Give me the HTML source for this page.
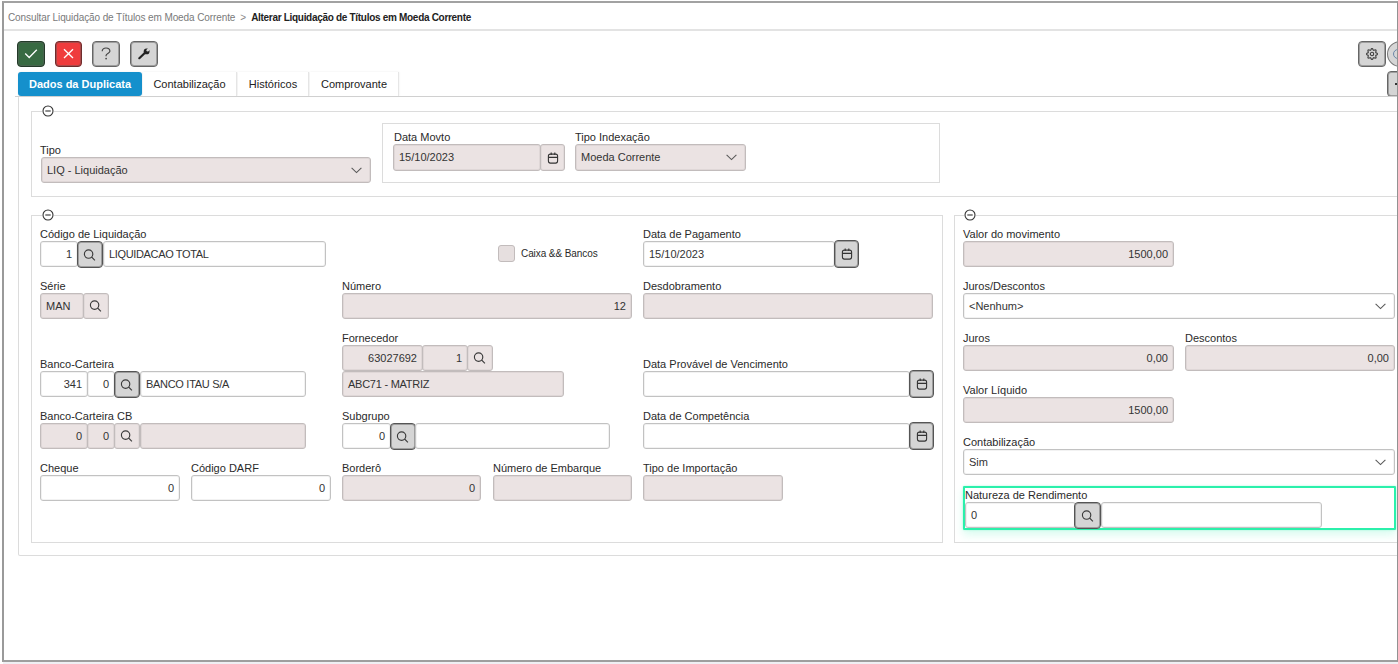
<!DOCTYPE html>
<html><head><meta charset="utf-8">
<style>
*{box-sizing:border-box;margin:0;padding:0}
html,body{width:1398px;height:664px;overflow:hidden;background:#fff;font-family:"Liberation Sans",sans-serif;color:#333}
.a{position:absolute}
#frame{position:absolute;z-index:10;left:2px;top:1px;width:1396px;height:661px;border:1px solid #929292;border-left:2px solid #9a9a9a;border-top:2px solid #a2a2a2;border-bottom:2px solid #9e9e9e}
#bottom{position:absolute;left:3px;top:662px;width:1395px;height:2px;background:#efeff3}
.sep{position:absolute;background:#e3e3e3}
.crumb{position:absolute;left:8px;top:12px;font-size:10px;color:#7a7a7a;letter-spacing:-0.1px;white-space:nowrap}
.crumb b{color:#222;letter-spacing:-0.3px}
.crumb .gt{color:#888;margin:0 5px 0 5px;letter-spacing:0}
.btn{position:absolute;height:26px;border-radius:4px;border:1px solid #555;background:#d5d5d5;box-shadow:inset 0 0 0 1px rgba(90,90,90,.45)}
.btn svg{position:absolute;left:50%;top:50%;transform:translate(-50%,-50%)}
.tab{position:absolute;top:72px;height:24px;font-size:11px;color:#222;text-align:center;line-height:24px;background:#fff;border-right:1px solid #e6e6e6;box-shadow:0 0 2px rgba(0,0,0,.08)}
.tab.on{background:#1590cc;color:#fff;font-weight:bold;border-radius:3px;border:none}
.panel{position:absolute;border:1px solid #dcdcdc;border-radius:2px}
.fs{position:absolute;border:1px solid #dcdcdc}
.leg{position:absolute;width:12px;height:12px;background:#fff}
.leg svg{display:block}
svg{display:block}
.lbl{position:absolute;font-size:11px;color:#2a2a2a;white-space:nowrap;line-height:13px}
.in{position:absolute;height:26px;border:1px solid #c2c2c2;box-shadow:inset 0 0 0 1px rgba(0,0,0,.05);border-radius:3px;background:#fff;font-size:11px;color:#333;line-height:24px;padding:0 5px;white-space:nowrap;overflow:hidden}
.dis{background:#ebe3e3;border-color:#c2bcbc}
.r{text-align:right}
.sb{position:absolute;height:27px;border:1px solid #555;border-radius:4px;background:#d5d5d5;box-shadow:inset 0 0 0 1px rgba(90,90,90,.45)}
.sbd{position:absolute;height:26px;border:1px solid #c2bcbc;box-shadow:inset 0 0 0 1px rgba(0,0,0,.04);border-radius:3px;background:#ebe3e3}
.ico{position:absolute;left:50%;top:50%;transform:translate(-50%,-50%)}
</style></head><body>
<div id="frame"></div>
<div id="bottom"></div>
<div class="crumb">Consultar Liquidação de Títulos em Moeda Corrente<span class="gt">&gt;</span><b>Alterar Liquidação de Títulos em Moeda Corrente</b></div>
<div class="sep" style="left:3px;top:29px;width:1395px;height:2px"></div>

<!-- toolbar -->
<div class="btn" style="left:17px;top:41px;width:28px;background:#386a42;border-color:#243a29"></div>
<svg class="a" style="left:24px;top:48px" width="14" height="11" viewBox="0 0 14 11"><path d="M1.2 5.5 L5.2 9.5 L12.8 1.8" stroke="#fff" stroke-width="1.3" fill="none"/></svg>
<div class="btn" style="left:55px;top:41px;width:27px;background:#ef3c3d;border-color:#6e2d2d"></div>
<svg class="a" style="left:63px;top:48px" width="11" height="11" viewBox="0 0 11 11"><path d="M1 1.2 L10 10 M10 1.2 L1 10" stroke="#fff" stroke-width="1.3" fill="none"/></svg>
<div class="btn" style="left:92px;top:41px;width:28px;border-color:#666;border-width:1.5px;border-radius:4px"></div>
<svg class="a" style="left:101px;top:47px" width="10" height="13" viewBox="0 0 10 13"><path d="M1.2 4.3 C1.2 2.2 2.8 1 5 1 C7.2 1 8.9 2.3 8.9 4.3 C8.9 6.3 5.1 6.6 5.1 8.3 V9.3" stroke="#454545" stroke-width="1.2" fill="none"/><circle cx="5.1" cy="11.6" r="0.85" fill="#454545"/></svg>
<div class="btn" style="left:130px;top:41px;width:28px;border-color:#666;border-width:1.5px;border-radius:4px"></div>
<svg class="a" style="left:137px;top:47px" width="14" height="14" viewBox="0 0 14 14"><path d="M2.3 11.2 L7.8 6" stroke="#222" stroke-width="2.2" stroke-linecap="round"/><circle cx="9.6" cy="4.4" r="2.9" fill="#222"/><circle cx="10.7" cy="3.3" r="1.2" fill="#d5d5d5"/><path d="M10.7 3.3 L13.6 0.4" stroke="#d5d5d5" stroke-width="1.9"/></svg>
<div class="btn" style="left:1358px;top:41px;width:28px;border-color:#666;border-width:1.5px;border-radius:4px"></div>
<svg class="a" style="left:1366px;top:47.5px" width="12" height="12" viewBox="0 0 12 12"><path d="M11.50 6.00 L11.39 6.35 L11.08 6.67 L10.66 6.93 L10.23 7.13 L9.88 7.32 L9.70 7.53 L9.68 7.81 L9.79 8.19 L9.95 8.64 L10.07 9.12 L10.06 9.56 L9.89 9.89 L9.56 10.06 L9.12 10.07 L8.64 9.95 L8.19 9.79 L7.81 9.68 L7.53 9.70 L7.32 9.88 L7.13 10.23 L6.93 10.66 L6.67 11.08 L6.35 11.39 L6.00 11.50 L5.65 11.39 L5.33 11.08 L5.07 10.66 L4.87 10.23 L4.68 9.88 L4.47 9.70 L4.19 9.68 L3.81 9.79 L3.36 9.95 L2.88 10.07 L2.44 10.06 L2.11 9.89 L1.94 9.56 L1.93 9.12 L2.05 8.64 L2.21 8.19 L2.32 7.81 L2.30 7.53 L2.12 7.32 L1.77 7.13 L1.34 6.93 L0.92 6.67 L0.61 6.35 L0.50 6.00 L0.61 5.65 L0.92 5.33 L1.34 5.07 L1.77 4.87 L2.12 4.68 L2.30 4.47 L2.32 4.19 L2.21 3.81 L2.05 3.36 L1.93 2.88 L1.94 2.44 L2.11 2.11 L2.44 1.94 L2.88 1.93 L3.36 2.05 L3.81 2.21 L4.19 2.32 L4.47 2.30 L4.68 2.12 L4.87 1.77 L5.07 1.34 L5.33 0.92 L5.65 0.61 L6.00 0.50 L6.35 0.61 L6.67 0.92 L6.93 1.34 L7.13 1.77 L7.32 2.12 L7.53 2.30 L7.81 2.32 L8.19 2.21 L8.64 2.05 L9.12 1.93 L9.56 1.94 L9.89 2.11 L10.06 2.44 L10.07 2.88 L9.95 3.36 L9.79 3.81 L9.68 4.19 L9.70 4.47 L9.88 4.68 L10.23 4.87 L10.66 5.07 L11.08 5.33 L11.39 5.65Z" stroke="#404040" stroke-width="1.15" fill="none" stroke-linejoin="round"/><circle cx="6" cy="6" r="1.7" stroke="#404040" stroke-width="1.1" fill="none"/></svg>
<div class="a" style="left:1387px;top:41px;width:27px;height:26px;border-radius:50%;border:1.5px solid #777;background:#d6d6d6"></div>
<div class="a" style="left:1393px;top:49px;width:10px;height:10px;border-radius:50%;border:1.5px solid #6b86a8"></div>
<div class="btn" style="left:1387px;top:71px;width:20px;height:26px;border-color:#666;border-width:1.5px;border-radius:4px"></div>
<div class="a" style="left:1395px;top:83px;width:2px;height:2px;background:#333"></div>

<!-- tabs -->
<div class="tab on" style="left:18px;width:124px">Dados da Duplicata</div>
<div class="tab" style="left:143px;width:94px">Contabilização</div>
<div class="tab" style="left:238px;width:71px">Históricos</div>
<div class="tab" style="left:310px;width:89px">Comprovante</div>
<div class="sep" style="left:15px;top:96px;width:1383px;height:1px;background:#d0d0d0"></div>

<div class="panel" style="left:18px;top:96px;width:1400px;height:460px;border-top:none"></div>

<!-- fieldset 1 -->
<div class="fs" style="left:31px;top:111px;width:1380px;height:86px"></div>
<div class="leg" style="left:42px;top:105px"><svg width="12" height="12" viewBox="0 0 12 12"><circle cx="6" cy="6" r="5" stroke="#333" stroke-width="1.1" fill="#fff"/><path d="M3.3 6 H8.7" stroke="#333" stroke-width="1.1"/></svg></div>

<div class="lbl" style="left:40px;top:144px">Tipo</div>
<div class="in dis" style="left:41px;top:157px;width:330px">LIQ - Liquidação<svg class="a" style="right:8px;top:9px" width="11" height="7" viewBox="0 0 11 7"><path d="M0.6 0.8 L5.5 5.6 L10.4 0.8" stroke="#5a5a5a" stroke-width="1.1" fill="none"/></svg></div>
<div class="fs" style="left:382px;top:123px;width:558px;height:60px"></div>
<div class="lbl" style="left:394px;top:131px">Data Movto</div>
<div class="in dis" style="left:393px;top:144px;width:148px;height:27px;line-height:25px">15/10/2023</div>
<div class="sbd" style="left:540px;top:144px;width:25px;height:27px"><svg class="ico" width="12" height="13" viewBox="0 0 12 13"><rect x="1.4" y="2.6" width="9.2" height="9" rx="2" stroke="#333" stroke-width="1.1" fill="none"/><path d="M1.4 5.9 H10.6 M4.2 0.9 V3.6 M7.8 0.9 V3.6" stroke="#333" stroke-width="1.1"/></svg></div>
<div class="lbl" style="left:575px;top:131px">Tipo Indexação</div>
<div class="in dis" style="left:575px;top:144px;width:171px;height:27px;line-height:25px">Moeda Corrente<svg class="a" style="right:8px;top:9px" width="11" height="7" viewBox="0 0 11 7"><path d="M0.6 0.8 L5.5 5.6 L10.4 0.8" stroke="#5a5a5a" stroke-width="1.1" fill="none"/></svg></div>
<div class="fs" style="left:31px;top:215px;width:912px;height:328px"></div>
<div class="leg" style="left:42px;top:209px"><svg width="12" height="12" viewBox="0 0 12 12"><circle cx="6" cy="6" r="5" stroke="#333" stroke-width="1.1" fill="#fff"/><path d="M3.3 6 H8.7" stroke="#333" stroke-width="1.1"/></svg></div>
<div class="fs" style="left:954px;top:215px;width:460px;height:328px"></div>
<div class="leg" style="left:964px;top:209px"><svg width="12" height="12" viewBox="0 0 12 12"><circle cx="6" cy="6" r="5" stroke="#333" stroke-width="1.1" fill="#fff"/><path d="M3.3 6 H8.7" stroke="#333" stroke-width="1.1"/></svg></div>
<div class="lbl" style="left:40px;top:228px">Código de Liquidação</div>
<div class="in r" style="left:40px;top:241px;width:38px;">1</div>
<div class="sb" style="left:77px;top:241px;width:26px"><svg class="ico" width="14" height="14" viewBox="0 0 14 14"><circle cx="5.6" cy="6.1" r="4.2" stroke="#3a3a3a" stroke-width="1.15" fill="none"/><path d="M8.7 9.2 L11.9 12.4" stroke="#3a3a3a" stroke-width="1.2"/></svg></div>
<div class="in" style="left:103px;top:241px;width:223px;"><span style="letter-spacing:-0.35px">LIQUIDACAO TOTAL</span></div>
<div class="a" style="left:498px;top:245px;width:17px;height:17px;border:1px solid #c2bcbc;border-radius:3px;background:#e6dfdf"></div>
<div class="lbl" style="left:521px;top:247px;font-size:10px;letter-spacing:-0.08px">Caixa &amp;&amp; Bancos</div>
<div class="lbl" style="left:643px;top:228px">Data de Pagamento</div>
<div class="in" style="left:643px;top:241px;width:192px;">15/10/2023</div>
<div class="sb" style="left:834px;top:240px;width:25px;height:28px"><svg class="ico" width="12" height="13" viewBox="0 0 12 13"><rect x="1.4" y="2.6" width="9.2" height="9" rx="2" stroke="#333" stroke-width="1.1" fill="none"/><path d="M1.4 5.9 H10.6 M4.2 0.9 V3.6 M7.8 0.9 V3.6" stroke="#333" stroke-width="1.1"/></svg></div>
<div class="lbl" style="left:40px;top:280px">Série</div>
<div class="in dis" style="left:40px;top:293px;width:44px;">MAN</div>
<div class="sbd" style="left:83px;top:293px;width:26px"><svg class="ico" width="14" height="14" viewBox="0 0 14 14"><circle cx="5.6" cy="6.1" r="4.2" stroke="#3a3a3a" stroke-width="1.15" fill="none"/><path d="M8.7 9.2 L11.9 12.4" stroke="#3a3a3a" stroke-width="1.2"/></svg></div>
<div class="lbl" style="left:342px;top:280px">Número</div>
<div class="in dis r" style="left:342px;top:293px;width:290px;">12</div>
<div class="lbl" style="left:643px;top:280px">Desdobramento</div>
<div class="in dis" style="left:643px;top:293px;width:290px;"></div>
<div class="lbl" style="left:342px;top:332px">Fornecedor</div>
<div class="in dis r" style="left:342px;top:345px;width:81px;">63027692</div>
<div class="in dis r" style="left:422px;top:345px;width:46px;">1</div>
<div class="sbd" style="left:467px;top:345px;width:26px"><svg class="ico" width="14" height="14" viewBox="0 0 14 14"><circle cx="5.6" cy="6.1" r="4.2" stroke="#3a3a3a" stroke-width="1.15" fill="none"/><path d="M8.7 9.2 L11.9 12.4" stroke="#3a3a3a" stroke-width="1.2"/></svg></div>
<div class="in dis" style="left:342px;top:371px;width:222px;"><span style="letter-spacing:-0.25px">ABC71 - MATRIZ</span></div>
<div class="lbl" style="left:40px;top:358px">Banco-Carteira</div>
<div class="in r" style="left:40px;top:371px;width:48px;">341</div>
<div class="in r" style="left:87px;top:371px;width:28px;">0</div>
<div class="sb" style="left:114px;top:371px;width:26px"><svg class="ico" width="14" height="14" viewBox="0 0 14 14"><circle cx="5.6" cy="6.1" r="4.2" stroke="#3a3a3a" stroke-width="1.15" fill="none"/><path d="M8.7 9.2 L11.9 12.4" stroke="#3a3a3a" stroke-width="1.2"/></svg></div>
<div class="in" style="left:140px;top:371px;width:166px;"><span style="letter-spacing:-0.3px">BANCO ITAU S/A</span></div>
<div class="lbl" style="left:643px;top:358px">Data Provável de Vencimento</div>
<div class="in" style="left:643px;top:371px;width:267px;"></div>
<div class="sb" style="left:909px;top:370px;width:25px;height:28px"><svg class="ico" width="12" height="13" viewBox="0 0 12 13"><rect x="1.4" y="2.6" width="9.2" height="9" rx="2" stroke="#333" stroke-width="1.1" fill="none"/><path d="M1.4 5.9 H10.6 M4.2 0.9 V3.6 M7.8 0.9 V3.6" stroke="#333" stroke-width="1.1"/></svg></div>
<div class="lbl" style="left:40px;top:410px">Banco-Carteira CB</div>
<div class="in dis r" style="left:40px;top:423px;width:48px;">0</div>
<div class="in dis r" style="left:87px;top:423px;width:28px;">0</div>
<div class="sbd" style="left:114px;top:423px;width:26px"><svg class="ico" width="14" height="14" viewBox="0 0 14 14"><circle cx="5.6" cy="6.1" r="4.2" stroke="#3a3a3a" stroke-width="1.15" fill="none"/><path d="M8.7 9.2 L11.9 12.4" stroke="#3a3a3a" stroke-width="1.2"/></svg></div>
<div class="in dis" style="left:140px;top:423px;width:166px;"></div>
<div class="lbl" style="left:342px;top:410px">Subgrupo</div>
<div class="in r" style="left:342px;top:423px;width:49px;">0</div>
<div class="sb" style="left:390px;top:423px;width:26px"><svg class="ico" width="14" height="14" viewBox="0 0 14 14"><circle cx="5.6" cy="6.1" r="4.2" stroke="#3a3a3a" stroke-width="1.15" fill="none"/><path d="M8.7 9.2 L11.9 12.4" stroke="#3a3a3a" stroke-width="1.2"/></svg></div>
<div class="in" style="left:415px;top:423px;width:195px;"></div>
<div class="lbl" style="left:643px;top:410px">Data de Competência</div>
<div class="in" style="left:643px;top:423px;width:267px;"></div>
<div class="sb" style="left:909px;top:422px;width:25px;height:28px"><svg class="ico" width="12" height="13" viewBox="0 0 12 13"><rect x="1.4" y="2.6" width="9.2" height="9" rx="2" stroke="#333" stroke-width="1.1" fill="none"/><path d="M1.4 5.9 H10.6 M4.2 0.9 V3.6 M7.8 0.9 V3.6" stroke="#333" stroke-width="1.1"/></svg></div>
<div class="lbl" style="left:40px;top:462px">Cheque</div>
<div class="in r" style="left:40px;top:475px;width:140px;">0</div>
<div class="lbl" style="left:191px;top:462px">Código DARF</div>
<div class="in r" style="left:191px;top:475px;width:140px;">0</div>
<div class="lbl" style="left:342px;top:462px">Borderô</div>
<div class="in dis r" style="left:342px;top:475px;width:139px;">0</div>
<div class="lbl" style="left:493px;top:462px">Número de Embarque</div>
<div class="in dis" style="left:493px;top:475px;width:139px;"></div>
<div class="lbl" style="left:643px;top:462px">Tipo de Importação</div>
<div class="in dis" style="left:643px;top:475px;width:140px;"></div>
<div class="lbl" style="left:963px;top:228px">Valor do movimento</div>
<div class="in dis r" style="left:963px;top:241px;width:211px;">1500,00</div>
<div class="lbl" style="left:963px;top:280px">Juros/Descontos</div>
<div class="in" style="left:963px;top:293px;width:432px">&lt;Nenhum&gt;<svg class="a" style="right:8px;top:9px" width="11" height="7" viewBox="0 0 11 7"><path d="M0.6 0.8 L5.5 5.6 L10.4 0.8" stroke="#5a5a5a" stroke-width="1.1" fill="none"/></svg></div>
<div class="lbl" style="left:963px;top:332px">Juros</div>
<div class="in dis r" style="left:963px;top:345px;width:211px;">0,00</div>
<div class="lbl" style="left:1185px;top:332px">Descontos</div>
<div class="in dis r" style="left:1185px;top:345px;width:210px;">0,00</div>
<div class="lbl" style="left:963px;top:384px">Valor Líquido</div>
<div class="in dis r" style="left:963px;top:397px;width:211px;">1500,00</div>
<div class="lbl" style="left:963px;top:436px">Contabilização</div>
<div class="in" style="left:963px;top:449px;width:432px">Sim<svg class="a" style="right:8px;top:9px" width="11" height="7" viewBox="0 0 11 7"><path d="M0.6 0.8 L5.5 5.6 L10.4 0.8" stroke="#5a5a5a" stroke-width="1.1" fill="none"/></svg></div>
<div class="a" style="left:963px;top:486px;width:433px;height:44px;border:2px solid #2bf0ab;border-radius:1px;box-shadow:0 5px 8px rgba(43,240,171,.18), 0 0 2px rgba(43,240,171,.4)"></div>
<div class="lbl" style="left:965px;top:489px">Natureza de Rendimento</div>
<div class="in" style="left:965px;top:502px;width:111px;">0</div>
<div class="sb" style="left:1074px;top:502px;width:27px"><svg class="ico" width="14" height="14" viewBox="0 0 14 14"><circle cx="5.6" cy="6.1" r="4.2" stroke="#3a3a3a" stroke-width="1.15" fill="none"/><path d="M8.7 9.2 L11.9 12.4" stroke="#3a3a3a" stroke-width="1.2"/></svg></div>
<div class="in" style="left:1101px;top:502px;width:221px;"></div>
</body></html>
